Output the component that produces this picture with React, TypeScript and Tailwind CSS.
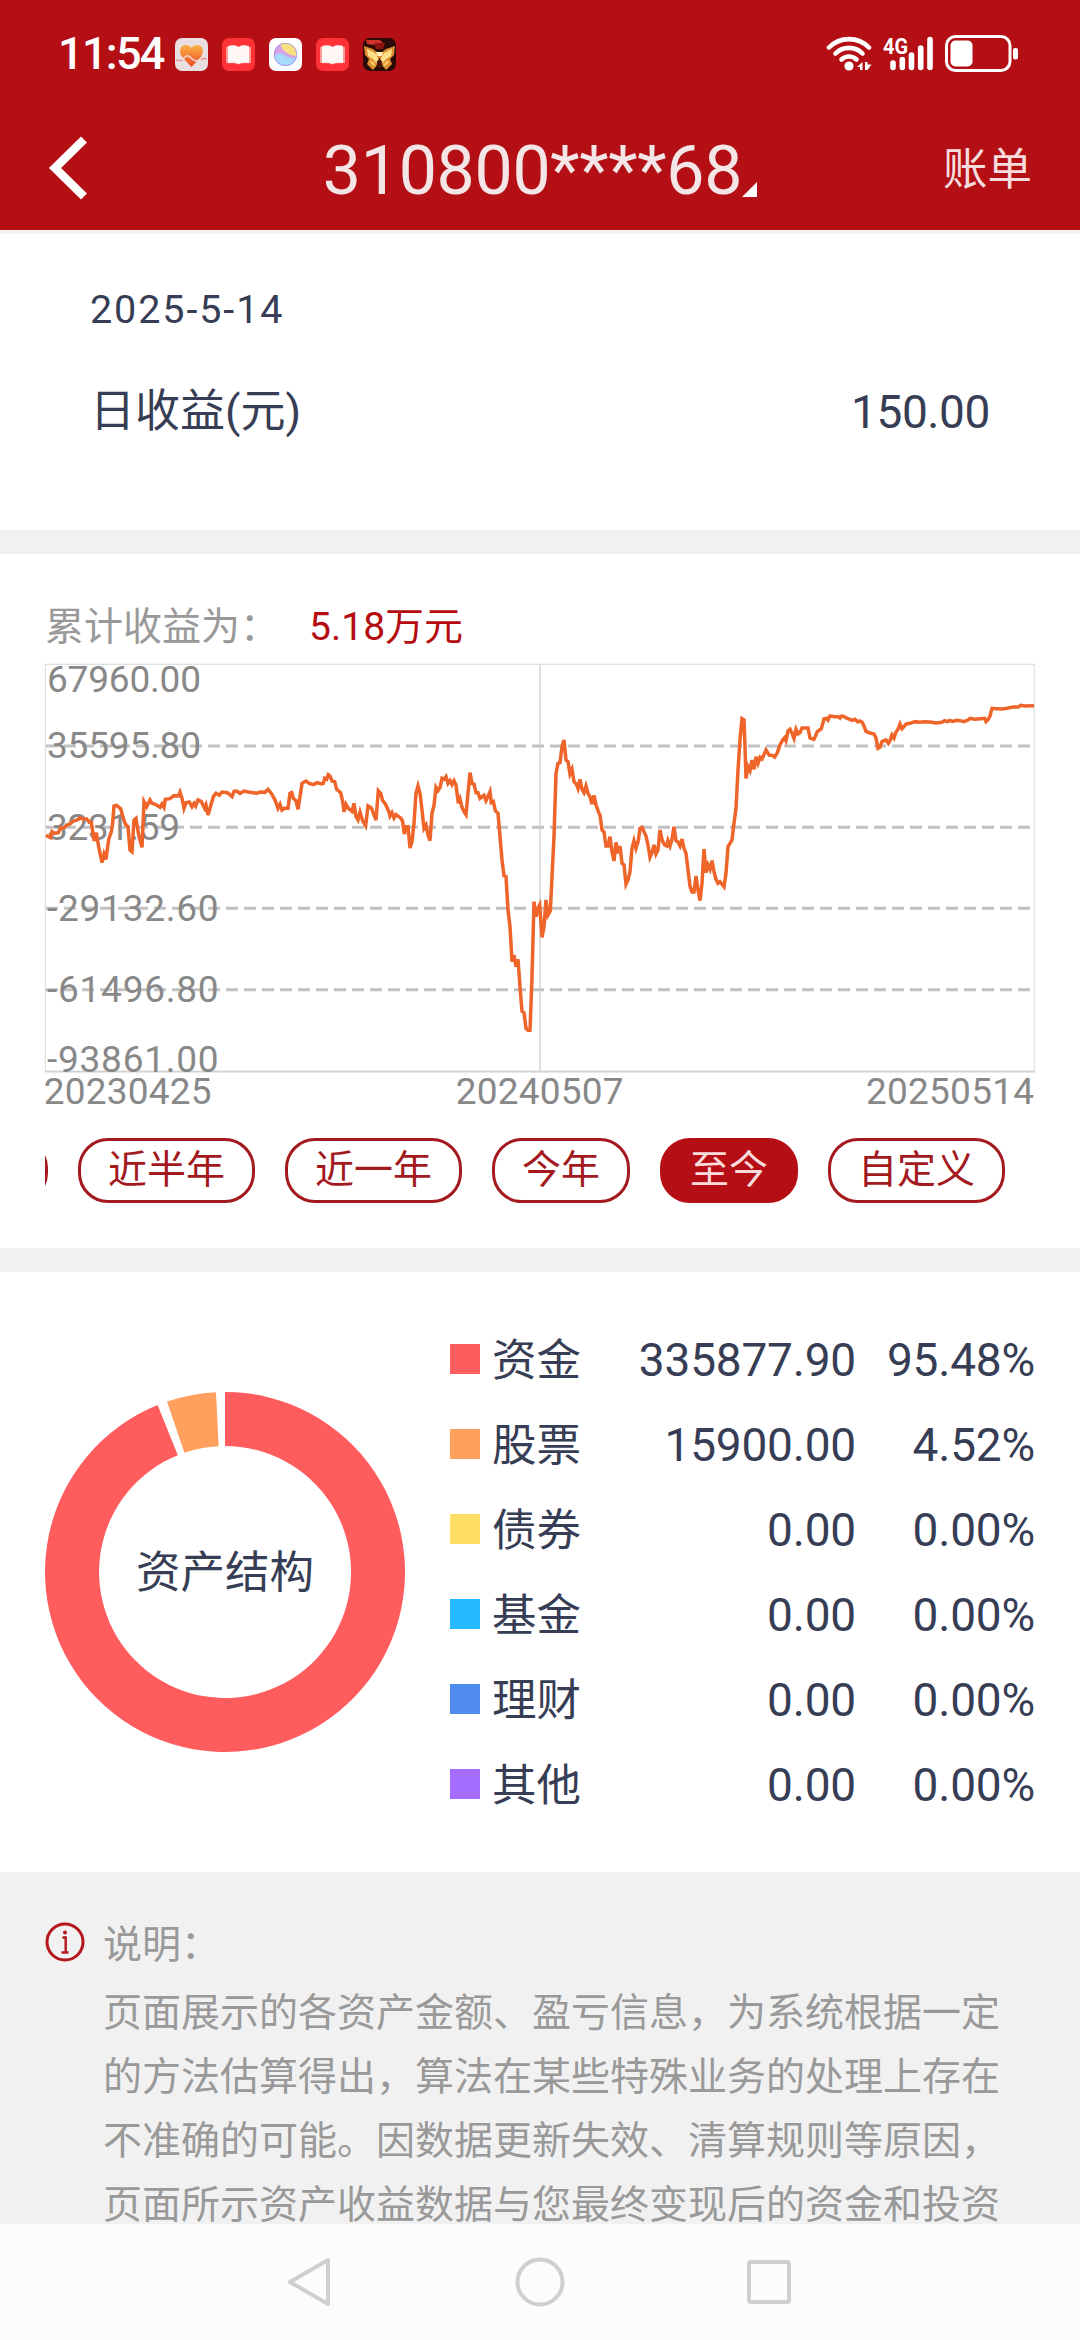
import type { ReactNode } from "react";

interface Asset {
  name: string;
  amount: string;
  percent: string;
  color: string;
}

interface AxisLabel {
  text: string;
  y: number;
  width: number;
}

const assets: Asset[] = [
  { name: "资金", amount: "335877.90", percent: "95.48%", color: "bg-[#ff5c5e]" },
  { name: "股票", amount: "15900.00", percent: "4.52%", color: "bg-[#ffa05f]" },
  { name: "债券", amount: "0.00", percent: "0.00%", color: "bg-[#ffdd62]" },
  { name: "基金", amount: "0.00", percent: "0.00%", color: "bg-[#26b9ff]" },
  { name: "理财", amount: "0.00", percent: "0.00%", color: "bg-[#508cee]" },
  { name: "其他", amount: "0.00", percent: "0.00%", color: "bg-[#a46cff]" },
];

const ranges = ["近半年", "近一年", "今年", "至今", "自定义"];

const noteLines = [
  "页面展示的各资产金额、盈亏信息，为系统根据一定",
  "的方法估算得出，算法在某些特殊业务的处理上存在",
  "不准确的可能。因数据更新失效、清算规则等原因，",
  "页面所示资产收益数据与您最终变现后的资金和投资",
];

// Chart coordinates use three units per pixel
const yLabels: AxisLabel[] = [
  { text: "67960.00", y: 125, width: 462 },
  { text: "35595.80", y: 323, width: 462 },
  { text: "3231.59", y: 569, width: 399 },
  { text: "-29132.60", y: 812, width: 515 },
  { text: "-61496.80", y: 1055, width: 515 },
  { text: "-93861.00", y: 1265, width: 515 },
];

const gridLines = [288, 532, 775, 1019];

const series = [
  "138,556 152,563 156,545 162,550 175,548 182,533 190,535 200,525 210,522 220,513 232,510 240,504 250,507 260,507 268,517 274,517 278,545 283,573 289,548 296,590 306,638 312,612 318,628 326,568 334,545 338,520 342,468 350,466 362,476 370,505 376,522 384,530 390,600 396,605 402,510 408,505 416,555 426,592 432,455 440,470 450,450 456,460 466,463 480,472 486,462 492,472 496,448 510,446 522,437 535,438 540,426 546,445 552,475 558,458 568,456 576,470 582,460 587,468 594,450 604,455 614,475 618,465 624,495 632,468 640,440 648,430 658,436 666,426 682,428 696,440 702,424 710,423 720,430 732,423 745,426 760,428 770,430 780,426 795,427 804,418 815,432 825,450 834,475 840,463 846,480 854,475 864,475 870,430 875,428 880,445 888,452 894,478 900,440 906,400 918,393 928,400 940,404 952,398 964,402 970,400 974,385 980,388 985,374",
  "990,378 996,393 1004,395 1010,418 1022,428 1028,455 1032,485 1038,463 1045,475 1056,484 1062,460 1068,500 1074,510 1080,486 1088,512 1097,527 1104,468 1114,474 1122,495 1128,510 1135,422 1142,430 1148,452 1156,462 1162,475 1168,488 1170,498 1176,488 1182,504 1188,494 1196,500 1204,506 1208,515 1213,552 1218,530 1224,530 1230,594 1236,575 1242,520 1248,430 1254,408 1260,430 1266,480 1272,535 1278,525 1284,555 1290,572 1296,490 1302,466 1308,412 1314,422 1320,412 1326,385 1332,388 1338,380 1344,400 1350,392 1356,404 1362,392 1368,405 1375,460 1380,447 1386,472 1392,485 1398,494 1404,430 1410,368 1416,400 1422,402 1428,428 1434,428 1440,445 1452,436 1458,452 1470,425 1474,458 1480,455 1486,482 1494,490 1500,560 1506,630 1512,677 1518,680 1524,780 1530,830 1536,935 1542,915 1548,950 1554,928 1560,1010 1566,1084 1572,1088 1578,1135 1584,1141 1590,1141 1596,980 1602,755 1608,800 1614,775 1619,765 1626,862 1632,830 1638,750 1644,795 1651,782 1656,680 1662,560 1668,370 1674,340 1680,338 1686,290 1692,270 1698,330 1704,335 1710,372 1716,358 1722,395 1729,402 1734,415 1740,388 1746,418 1752,428 1758,408 1764,430 1770,440 1776,462 1782,436 1788,465 1798,492",
  "1800,495 1806,540 1812,546 1818,588 1824,588 1830,560 1836,605 1842,633 1848,577 1854,610 1860,588 1866,640 1872,645 1878,703 1884,690 1890,665 1896,595 1902,572 1908,595 1915,572 1920,535 1926,532 1932,545 1938,558 1944,585 1950,622 1956,608 1962,585 1968,612 1974,600 1980,540 1987,572 1994,585 2000,588 2004,572 2010,588 2016,568 2022,530 2028,572 2034,576 2040,588 2046,567 2052,595 2058,610 2064,660 2070,708 2076,726 2082,726 2088,678 2094,720 2100,752 2106,700 2112,597 2118,668 2124,645 2130,658 2136,632 2142,665 2148,688 2154,700 2160,695 2172,710 2178,670 2184,590 2190,580 2196,570 2202,520 2208,475 2214,360 2220,270 2226,206 2232,210 2235,290 2238,385 2244,350 2250,362 2256,330 2262,358 2268,320 2274,340 2280,322 2286,327 2298,300 2308,316 2316,316 2324,321 2332,308 2340,285 2348,270 2354,263 2358,272 2364,243 2370,238 2376,250 2382,265 2388,238 2394,252 2400,248 2406,234 2424,234 2430,264 2442,268 2452,245 2464,236 2472,207 2480,205 2484,210 2490,198 2505,200 2515,200 2520,204 2525,198 2532,200 2542,205 2556,211 2565,208 2574,216 2580,213",
  "2586,216 2592,228 2598,244 2610,249 2622,252 2628,264 2634,295 2640,292 2646,275 2658,270 2665,280 2670,272 2676,255 2682,264 2688,246 2694,238 2700,222 2706,236 2712,230 2718,222 2730,220 2745,215 2758,217 2775,215 2790,216 2808,219 2825,217 2834,212 2842,215 2850,211 2858,214 2870,211 2880,212 2892,215 2904,210 2910,205 2925,208 2940,206 2954,205 2958,215 2965,208 2970,198 2976,175 2990,176 3008,177 3025,174 3040,171 3055,171 3062,166 3075,168 3102,167",
].join(" ");

function HealthIcon() {
  return (
    <svg className="h-[33px] w-[33px]" viewBox="0 0 33 33">
      <defs>
        <linearGradient id="heart" x1="0" y1="0" x2="0" y2="1">
          <stop offset="0" stopColor="#fbb04a" />
          <stop offset="1" stopColor="#ee4a20" />
        </linearGradient>
      </defs>
      <rect width="33" height="33" rx="7" fill="#eadfe0" />
      <path d="M16.5 29 8 20C3 14 5 7 10.500 7c3 0 5 1 6 3 1-2 3-3 6-3C28 7 30 14 25 20Z" fill="url(#heart)" />
      <path d="M1 22c4 1 6 1 8-2s4-3 7 0 5 4 8 2 5-2 8-1" fill="none" stroke="#f3d4cc" strokeWidth="1.600" />
      <path d="M1 22c3 1 5 1 6 0M26 21.500c2-1 4-1 6-.5" fill="none" stroke="#dd8b8b" strokeWidth="1.200" />
    </svg>
  );
}

function BookIcon() {
  return (
    <svg className="h-[33px] w-[33px]" viewBox="0 0 33 33">
      <rect width="33" height="33" rx="7" fill="#ff3238" />
      <path d="M4 9h25v16l-10 .5-2.500 1-2.500-1L4 25Z" fill="#ff9a96" />
      <path d="M6 8c4-1 8-1 10.500 1C19 7 23 7 27 8v17c-4-.5-8-.5-10.500 1C14 24.500 10 24.500 6 25Z" fill="#fff8f7" />
    </svg>
  );
}

function BallIcon() {
  return (
    <svg className="h-[33px] w-[33px]" viewBox="0 0 33 33">
      <defs>
        <clipPath id="ball">
          <circle cx="16.500" cy="16.500" r="11.500" />
        </clipPath>
      </defs>
      <rect width="33" height="33" rx="7" fill="#fff" />
      <g clipPath="url(#ball)">
        <rect width="33" height="33" fill="#a9cdfb" />
        <path d="M4 18c5-2 9-1 13 2s8 3 12 0v12H4Z" fill="#a6dcfb" />
        <path d="M4 4h8c0 6 4 11 17 14-6 4-11 0-15-2S6 16 4 20Z" fill="#d7a3e6" />
        <path d="M11 3h20v14c-7 3-20-3-20-14Z" fill="#fbe07e" />
      </g>
      <circle cx="16.500" cy="16.500" r="11.200" fill="none" stroke="#a58be0" strokeWidth=".8" />
    </svg>
  );
}

function GameIcon() {
  return (
    <svg className="h-[33px] w-[33px]" viewBox="0 0 33 33">
      <rect width="33" height="33" rx="7" fill="#2a0b08" />
      <path d="M3 2h14l3 3-9 2-7-1Z" fill="#d0342a" />
      <path d="M11 5h11l-2 6h-7Z" fill="#8d1410" />
      <path d="M1 8l9 3 5 4h3l5-4 9-3-1 9-4 4 2 5-6 6-4-5-1-5h-3l-1 5-4 5-6-6 2-5-4-4Z" fill="#dc8f30" />
      <path d="M4 11l8 4 3 5-1 6-4-5-5-3ZM29 11l-8 4-3 5 1 6 4-5 5-3Z" fill="#ffe08a" />
      <path d="M7 22l4 2 2 5-5-3ZM26 22l-4 2-2 5 5-3Z" fill="#fbc763" />
      <path d="M13 14h7l-1 4h-5Z" fill="#fff0b8" />
      <path d="M16.500 20v10M14.500 23v6M18.500 23v6" stroke="#5b2008" strokeWidth="1.300" />
    </svg>
  );
}

function StatusBar() {
  return (
    <div className="flex h-[108px] items-center justify-between pl-[58px] pr-[62px]">
      <div className="flex items-center">
        <span className="w-[117px] whitespace-nowrap text-[45px] font-medium leading-[50px] tracking-[-1.7px] text-white">
          11:54
        </span>
        <div className="flex gap-[14px]">
          <HealthIcon />
          <BookIcon />
          <BallIcon />
          <BookIcon />
          <GameIcon />
        </div>
      </div>
      <svg className="h-10 w-[192px]" viewBox="826 34 192 40" fill="none">
        {/* Wifi */}
        <g stroke="#fff" strokeWidth="4.600" strokeLinecap="round">
          <path d="M829 47.500a28 28 0 0 1 40 0" />
          <path d="M835.500 53.500a19 19 0 0 1 27 0" />
          <path d="M841.500 59.500a11 11 0 0 1 15 0" />
        </g>
        <circle cx="849" cy="66" r="4.600" fill="#fff" />
        <path d="M857 67l5.500-5v8h-2.500v-3ZM865 62v8h2.500l4-5.500h-4V62Z" fill="#fff" />
        {/* Mobile signal */}
        <text x="883" y="53.500" fill="#fff" className="text-[22px] font-bold" textLength="25" lengthAdjust="spacingAndGlyphs">
          4G
        </text>
        <g stroke="#fff" strokeWidth="5.600" strokeLinecap="round">
          <path d="M893 63v4.500M902.300 59.500v8M911.500 55v12.500M920.700 48v19.500M930 39.500v28" />
        </g>
        {/* Battery */}
        <rect x="946.500" y="36.500" width="63.500" height="34" rx="9" stroke="#fff" strokeWidth="3" />
        <rect x="950.500" y="40.500" width="22" height="26" rx="5" fill="#fff" />
        <rect x="1013" y="48" width="5" height="11.500" rx="2" fill="#fff" />
      </svg>
    </div>
  );
}

function TitleBar() {
  return (
    <div className="grid h-[122px] grid-cols-[280px_1fr_280px] items-center pb-[2px]">
      <svg className="ml-12 h-16 w-10" viewBox="48 136 40 64" fill="none">
        <path d="M84 139.500 55 168l29 28.500" stroke="#fff" strokeWidth="8.500" />
      </svg>
      <div className="flex items-end justify-center pt-[5px]">
        <h1 className="whitespace-nowrap text-[68px] font-normal leading-[80px] tracking-[-0.3px] text-[#f4e6e7]">
          310800****68
        </h1>
        <svg className="mb-[14px] h-[15px] w-[15px]" viewBox="0 0 15 15">
          <path d="M15 0v15H0Z" fill="#fff" />
        </svg>
      </div>
      <span className="mr-[48px] pt-[3px] text-right text-[44.500px] leading-[60px] text-[#f7dcde]">账单</span>
    </div>
  );
}

function DailyProfit() {
  return (
    <section className="flex h-[300px] flex-col border-t-4 border-[#f4f2f2] px-[90px] text-[#363d54]">
      <p className="mt-[48px] text-[39.5px] leading-[56px] tracking-[1.900px]">2025-5-14</p>
      <div className="mt-[44px] flex items-center justify-between leading-[60px]">
        <span className="text-[45px]">日收益(元)</span>
        <span className="text-[46px] tracking-[-0.4px]">150.00</span>
      </div>
    </section>
  );
}

function ProfitChart() {
  return (
    <svg className="h-[480px] w-[1080px]" viewBox="0 0 3240 1440" fill="none">
      <rect x="136" y="43" width="2967" height="1221" stroke="#dedede" strokeWidth="3.500" />
      <path d="M136 1265H3105" stroke="#d2d2d2" strokeWidth="5" />
      <path d="M1620 43v1221" stroke="#dedede" strokeWidth="6" />
      {gridLines.map((y) => (
        <path key={y} d={`M138 ${y}H3103`} stroke="#c1c1c1" strokeWidth="9" strokeDasharray="36 18" />
      ))}
      <g fill="#888" className="text-[111px]">
        {yLabels.map((label) => (
          <text key={label.text} x="141" y={label.y} textLength={label.width}>
            {label.text}
          </text>
        ))}
        <text x="131" y="1363" textLength="504">20230425</text>
        <text x="1367" y="1363" textLength="504">20240507</text>
        <text x="2598" y="1363" textLength="504">20250514</text>
      </g>
      <polyline points={series} stroke="#ee6429" strokeWidth="10.500" strokeLinejoin="miter" />
    </svg>
  );
}

function Pill({ active, children }: { active?: boolean; children?: ReactNode }) {
  return (
    <button
      className={
        active
          ? "h-[65px] shrink-0 rounded-[30px] border-[3px] border-[#b50f15] bg-[#b50f15] px-[27px] text-[39px] leading-[57px] text-[#fbdadc]"
          : "h-[65px] shrink-0 rounded-[30px] border-[3px] border-[#a3191e] px-[27px] text-[39px] leading-[57px] text-[#a3191e]"
      }
    >
      {children}
    </button>
  );
}

function TotalProfit() {
  return (
    <section className="h-[694px] pt-[50px]">
      <p className="flex h-[46px] items-center px-[45px] text-[39px] leading-[46px] text-[#999]">
        累计收益为：
        <span className="ml-[30px] text-[#b40c10]">5.18万元</span>
      </p>
      <ProfitChart />
      <div className="mx-[45px] mt-[8px] flex justify-end gap-[30px] overflow-hidden pr-[30px]">
        <Pill>
          <span className="block w-[117px]" />
        </Pill>
        {ranges.map((range) => (
          <Pill key={range} active={range === "至今"}>
            {range}
          </Pill>
        ))}
      </div>
    </section>
  );
}

function AssetStructure() {
  return (
    <section className="flex h-[600px] text-[#363d54]">
      <div className="relative ml-[45px] mt-[120px] h-[360px] w-[360px]">
        <svg className="h-full w-full" viewBox="0 0 360 360">
          <path d="M180 0A180 180 0 1 1 112.600 13.100L132.800 63.200A126 126 0 1 0 180 54Z" fill="#ff5c5e" />
          <path d="M122 9.600A180 180 0 0 1 171 .2L173.700 54.200A126 126 0 0 0 139.400 60.700Z" fill="#ffa05f" />
        </svg>
        <span className="absolute inset-0 flex items-center justify-center pt-[2px] text-[44.500px]">资产结构</span>
      </div>
      <ul className="ml-[45px] mr-[45px] mt-[45px] flex-1">
        {assets.map((asset) => (
          <li key={asset.name} className="flex h-[85px] items-center leading-[60px]">
            <i className={`mb-[1px] h-[30px] w-[30px] ${asset.color}`} />
            <span className="ml-3 pt-[3px] text-[44.500px]">{asset.name}</span>
            <span className="ml-auto pt-[1px] text-right text-[46px] tracking-[-0.2px]">{asset.amount}</span>
            <span className="w-[179px] pt-[1px] text-right text-[46px] tracking-[-0.2px]">{asset.percent}</span>
          </li>
        ))}
      </ul>
    </section>
  );
}

function Note() {
  return (
    <section className="flex h-[352px] overflow-hidden bg-[#f1f1f1] pl-[45px] pt-[41px] text-[39px] text-[#999]">
      <svg className="mt-[9px] h-10 w-10 shrink-0" viewBox="0 0 40 40" fill="none">
        <circle cx="20" cy="20" r="18" stroke="#b5161b" strokeWidth="3" />
        <circle cx="20" cy="10.500" r="2" fill="#b5161b" />
        <path d="M17.500 15.500h3.200V30M16.500 30.500h7" stroke="#b5161b" strokeWidth="2.400" />
      </svg>
      <div className="ml-[18px] whitespace-nowrap leading-[64px]">
        <p>说明：</p>
        <div className="mt-[4px]">
          {noteLines.map((line) => (
            <p key={line}>{line}</p>
          ))}
        </div>
      </div>
    </section>
  );
}

function NavBar() {
  return (
    <nav className="flex h-[116px] items-center justify-center gap-[180px] bg-[#fcfcfc]">
      <svg className="h-[50px] w-[50px]" viewBox="0 0 50 50" fill="none" stroke="#cfcfcf" strokeWidth="4" strokeLinejoin="round">
        <path d="M43 3v44L5 25Z" />
      </svg>
      <svg className="h-[50px] w-[50px]" viewBox="0 0 50 50" fill="none" stroke="#cfcfcf" strokeWidth="4">
        <circle cx="25" cy="25" r="22.500" />
      </svg>
      <svg className="h-[50px] w-[50px]" viewBox="0 0 50 50" fill="none" stroke="#cfcfcf" strokeWidth="4">
        <rect x="4" y="5" width="40" height="40" rx="2" />
      </svg>
    </nav>
  );
}

export default function App() {
  return (
    <div className="flex h-[2340px] w-[1080px] flex-col overflow-hidden bg-white font-['Roboto','Noto_Sans_CJK_SC',sans-serif]">
      <header className="h-[230px] bg-[#b40f15]">
        <StatusBar />
        <TitleBar />
      </header>
      <DailyProfit />
      <div className="h-6 bg-[#f1f1f1]" />
      <TotalProfit />
      <div className="h-6 bg-[#f1f1f1]" />
      <AssetStructure />
      <Note />
      <NavBar />
    </div>
  );
}
